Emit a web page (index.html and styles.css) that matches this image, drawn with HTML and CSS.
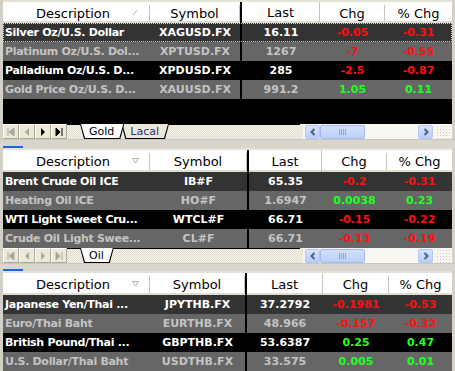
FILE: index.html
```html
<!DOCTYPE html>
<html>
<head>
    <title>Quotes</title>
    <link rel="stylesheet" href="styles.css">
</head>
<body>
    <!-- Gold sheet -->
    <div class="panel p1">
        <div class="head">
            <div class="hc">Description <svg class="sort" width="7" height="7"><path d="M1 6 L5 1" stroke="#b0b0b0" fill="none"/></svg></div>
            <div class="hc">Symbol</div>
            <div class="hc last">Last</div>
            <div class="hc">Chg</div>
            <div class="hc">% Chg</div>
        </div>
        <div class="body fill">
            <div class="row dark focus">
                <div class="desc">Silver Oz/U.S. Dollar</div><div>XAGUSD.FX</div><div class="last">16.11</div><div class="dn">-0.05</div><div class="dn">-0.31</div>
            </div>
            <div class="row mid">
                <div class="desc">Platinum Oz/U.S. Dol...</div><div>XPTUSD.FX</div><div class="last">1267</div><div class="dn">-7</div><div class="dn">-0.55</div>
            </div>
            <div class="row black">
                <div class="desc">Palladium Oz/U.S. D...</div><div>XPDUSD.FX</div><div class="last">285</div><div class="dn">-2.5</div><div class="dn">-0.87</div>
            </div>
            <div class="row mid">
                <div class="desc">Gold Price Oz/U.S. D...</div><div>XAUUSD.FX</div><div class="last">991.2</div><div class="up">1.05</div><div class="up">0.11</div>
            </div>
        </div>
        <div class="tabbar">
            <div class="nav">
                <span class="nb"><svg width="8" height="8"><path d="M1 0v8M7 0v8L2 4z" stroke="#aca899" fill="#aca899"/></svg></span>
                <span class="nb"><svg width="8" height="8"><path d="M6 0v8L2 4z" fill="#aca899"/></svg></span>
                <span class="nb"><svg width="8" height="8"><path d="M2 0v8L6 4z" fill="#000"/></svg></span>
                <span class="nb"><svg width="8" height="8"><path d="M1 0v8L5 4zM7 0v8" stroke="#000" fill="#000"/></svg></span>
            </div>
            <div class="tabs">
                <span class="tab on">Gold</span>
                <span class="tab">Lacal</span>
            </div>
            <div class="hatch"></div>
            <div class="hscroll">
                <span class="sb"><svg width="8" height="8"><path d="M5.5 1L2.5 4l3 3" stroke="#4d6185" stroke-width="2" fill="none"/></svg></span>
                <span class="thumb"><i></i><i></i><i></i><i></i></span>
                <span class="track"></span>
                <span class="sb"><svg width="8" height="8"><path d="M2.5 1l3 3-3 3" stroke="#4d6185" stroke-width="2" fill="none"/></svg></span>
                <span class="grip"></span>
            </div>
        </div>
    </div>
    <div class="split"><span class="mark"></span></div>

    <!-- Oil sheet -->
    <div class="panel p2">
        <div class="head">
            <div class="hc">Description <svg class="sort" width="7" height="7"><path d="M0.5 1.5h6L3.5 6z" stroke="#b0b0b0" fill="none"/></svg></div>
            <div class="hc">Symbol</div>
            <div class="hc last">Last</div>
            <div class="hc">Chg</div>
            <div class="hc">% Chg</div>
        </div>
        <div class="body">
            <div class="row dark">
                <div class="desc">Brent Crude Oil ICE</div><div>IB#F</div><div class="last">65.35</div><div class="dn">-0.2</div><div class="dn">-0.31</div>
            </div>
            <div class="row mid">
                <div class="desc">Heating Oil ICE</div><div>HO#F</div><div class="last">1.6947</div><div class="up">0.0038</div><div class="up">0.23</div>
            </div>
            <div class="row black">
                <div class="desc">WTI Light Sweet Cru...</div><div>WTCL#F</div><div class="last">66.71</div><div class="dn">-0.15</div><div class="dn">-0.22</div>
            </div>
            <div class="row mid">
                <div class="desc">Crude Oil Light Swee...</div><div>CL#F</div><div class="last">66.71</div><div class="dn">-0.13</div><div class="dn">-0.19</div>
            </div>
        </div>
        <div class="tabbar">
            <div class="nav">
                <span class="nb"><svg width="8" height="8"><path d="M1 0v8M7 0v8L2 4z" stroke="#aca899" fill="#aca899"/></svg></span>
                <span class="nb"><svg width="8" height="8"><path d="M6 0v8L2 4z" fill="#aca899"/></svg></span>
                <span class="nb"><svg width="8" height="8"><path d="M2 0v8L6 4z" fill="#aca899"/></svg></span>
                <span class="nb"><svg width="8" height="8"><path d="M1 0v8L5 4zM7 0v8" stroke="#aca899" fill="#aca899"/></svg></span>
            </div>
            <div class="tabs">
                <span class="tab on">Oil</span>
            </div>
            <div class="hatch"></div>
            <div class="hscroll">
                <span class="sb"><svg width="8" height="8"><path d="M5.5 1L2.5 4l3 3" stroke="#4d6185" stroke-width="2" fill="none"/></svg></span>
                <span class="thumb"><i></i><i></i><i></i><i></i></span>
                <span class="track"></span>
                <span class="sb"><svg width="8" height="8"><path d="M2.5 1l3 3-3 3" stroke="#4d6185" stroke-width="2" fill="none"/></svg></span>
                <span class="grip"></span>
            </div>
        </div>
    </div>
    <div class="split s2"><span class="mark"></span></div>

    <!-- Currency sheet -->
    <div class="panel p3">
        <div class="head">
            <div class="hc">Description <svg class="sort" width="7" height="7"><path d="M0.5 1.5h6L3.5 6z" stroke="#b0b0b0" fill="none"/></svg></div>
            <div class="hc">Symbol</div>
            <div class="hc last">Last</div>
            <div class="hc">Chg</div>
            <div class="hc">% Chg</div>
        </div>
        <div class="body">
            <div class="row dark">
                <div class="desc">Japanese Yen/Thai ...</div><div>JPYTHB.FX</div><div class="last">37.2792</div><div class="dn">-0.1981</div><div class="dn">-0.53</div>
            </div>
            <div class="row mid">
                <div class="desc">Euro/Thai Baht</div><div>EURTHB.FX</div><div class="last">48.966</div><div class="dn">-0.157</div><div class="dn">-0.32</div>
            </div>
            <div class="row black">
                <div class="desc">British Pound/Thai ...</div><div>GBPTHB.FX</div><div class="last">53.6387</div><div class="up">0.25</div><div class="up">0.47</div>
            </div>
            <div class="row mid">
                <div class="desc">U.S. Dollar/Thai Baht</div><div>USDTHB.FX</div><div class="last">33.575</div><div class="up">0.005</div><div class="up">0.01</div>
            </div>
        </div>
    </div>
</body>
</html>
```

FILE: styles.css
```css
body {
    margin: 0;
    width: 455px;
    height: 371px;
    overflow: hidden;
    background: #d4d0c8;
    font-family: "DejaVu Sans", Tahoma, sans-serif;
}

.panel {
    margin: 0 3px;
    border-top: 2px solid #e4e1d8;
}

.head, .row {
    display: grid;
}
.p1 .head, .p1 .row { grid-template-columns: 147px 90px 80px 65px 67px; }
.p2 .head, .p2 .row { grid-template-columns: 147px 97px 75px 65px 65px; }
.p3 .head, .p3 .row { grid-template-columns: 147px 95px 78px 66px 63px; }

.head {
    height: 22px;
    background: #fff;
    box-shadow: inset 0 -2px 0 #e0ddd0;
    font-size: 13px;
    color: #000;
}
.p1 .head { height: 21px; }

.hc {
    display: flex;
    align-items: center;
    justify-content: center;
    position: relative;
    border-right: 1px solid #c7c5b8;
    margin: 3px 0 2px;
    white-space: nowrap;
}
.hc:first-child { padding-right: 6px; }
.hc:last-child { border-right: none; }
.hc.last {
    margin-top: 0;
    margin-bottom: 0;
    border-left: 2px solid #000;
}
.hc .sort {
    position: absolute;
    right: 10px;
    top: 4px;
}

.body { background: #000; }
.body.fill { height: 101px; }

.row {
    height: 19px;
    line-height: 19px;
    font-size: 11px;
    font-weight: bold;
    text-align: center;
}
.row > div {
    white-space: nowrap;
    overflow: hidden;
}
.row > .desc {
    text-align: left;
    padding-left: 2px;
    letter-spacing: -0.3px;
    overflow: visible;
    position: relative;
    z-index: 1;
}
.row .last { border-left: 2px solid #000; }

.dark { background: #333; color: #fff; }
.black { background: #000; color: #fff; }
.mid { background: #666; color: #c4c4c4; }
.row .dn { color: #ff1010; }
.row .up { color: #22ff22; }

.focus {
    outline: 1px dotted #cfcfcf;
    outline-offset: -1px;
}

/* sheet tabs + horizontal scroll */
.tabbar {
    display: flex;
    height: 15px;
    background: #ece9d8;
}
.nav {
    display: flex;
    width: 64px;
}
.nb {
    width: 16px;
    height: 15px;
    display: flex;
    align-items: center;
    justify-content: center;
    box-sizing: border-box;
    border: 1px solid;
    border-color: #fff #aca899 #aca899 #fff;
    background: #ece9d8;
}
.tabs {
    display: flex;
    padding-left: 13px;
    border-top: 1px solid #000;
    background: repeating-conic-gradient(#f6f5ee 0 25%, #dedbcc 0 50%) 0 0/2px 2px;
}
.tab {
    position: relative;
    height: 14px;
    line-height: 13px;
    padding: 0 10px 0 9px;
    margin-right: -3px;
    font-size: 11px;
    color: #2b2b80;
    z-index: 1;
}
.tab::before, .tab::after {
    content: '';
    position: absolute;
    z-index: -1;
    clip-path: polygon(0 0, 100% 0, calc(100% - 4px) 100%, 4px 100%);
}
.tab::before {
    inset: -1px 0 0 0;
    background: #000;
}
.tab::after {
    inset: -1px 1px 1px 1px;
    background: #ece9d8;
}
.tab.on {
    color: #000;
    z-index: 2;
}
.tab.on::after { background: #fff; }
.hatch {
    flex: 1;
    border-top: 1px solid #000;
    background: repeating-conic-gradient(#f6f5ee 0 25%, #dedbcc 0 50%) 0 0/2px 2px;
}
.hscroll {
    display: flex;
    align-items: center;
    width: 149px;
    margin-left: 3px;
    background: #f7f6f1;
}
.sb {
    width: 15px;
    height: 14px;
    box-sizing: border-box;
    display: flex;
    align-items: center;
    justify-content: center;
    border: 1px solid #b4c8f6;
    border-radius: 2px;
    background: linear-gradient(#d8e4fe, #b9cdfa);
    margin-left: 2px;
}
.thumb {
    width: 45px;
    height: 14px;
    box-sizing: border-box;
    display: flex;
    align-items: center;
    justify-content: center;
    gap: 1px;
    border: 1px solid #a4b9ef;
    border-radius: 2px;
    background: linear-gradient(#d3e0fd, #bcd0fa);
}
.thumb i {
    width: 1px;
    height: 6px;
    background: #8ba3e0;
}
.track { flex: 1; }
.grip {
    width: 16px;
    height: 14px;
    margin-left: 3px;
    background: radial-gradient(#c0bdb0 40%, transparent 45%) 0 0/3px 3px;
    opacity: 0.8;
}

.split {
    height: 9px;
    display: flex;
    align-items: flex-end;
    padding-left: 3px;
    background: linear-gradient(#c9c6bc 0 1px, #d8d5cc 1px);
}
.split.s2 { height: 8px; }
.mark {
    width: 20px;
    height: 2px;
    background: #1c64e2;
}
```
